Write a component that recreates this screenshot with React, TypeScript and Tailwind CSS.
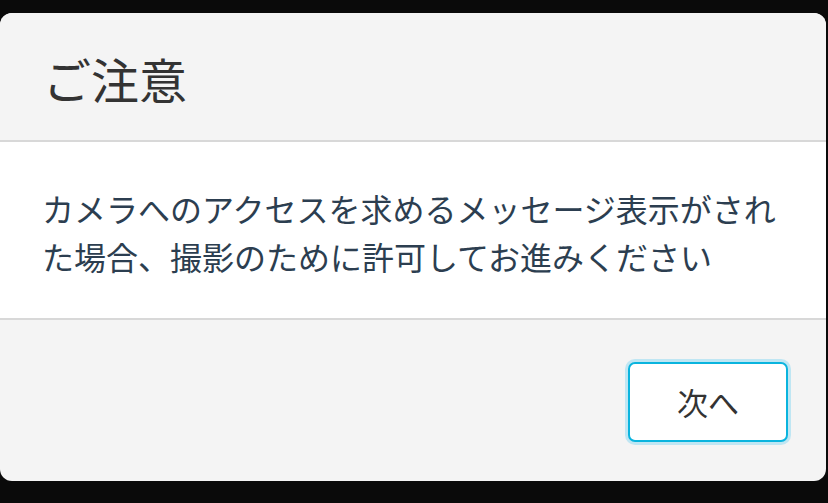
import React from 'react'

export default function App() {
  return (
    <div
      className="w-[828px] h-[503px] bg-[#0a0a0a] pt-[13px] overflow-hidden"
      style={{ fontFamily: '"Noto Sans CJK JP", "Noto Sans", sans-serif' }}
    >
      <div className="w-[826px] h-[468px] rounded-[12px] overflow-hidden flex flex-col bg-[#f4f4f4]">
        {/* header */}
        <div className="h-[129px] border-b-2 border-[#d8d8d8] flex items-center px-[43px] pt-[3px] bg-[#f4f4f4]">
          <h1 className="text-[48px] leading-none text-[#333333] font-normal">ご注意</h1>
        </div>
        {/* body */}
        <div className="h-[178px] bg-white border-b-2 border-[#d8d8d8] px-[42px] pt-[3px] flex items-center">
          <p className="text-[32px] leading-[48px] text-[#2c3e50]">
            カメラへのアクセスを求めるメッセージ表示がされた場合、撮影のために許可してお進みください
          </p>
        </div>
        {/* footer */}
        <div className="flex-1 flex items-center justify-end pr-[38px] pt-[3px]">
          <button className="w-[160px] h-[80px] bg-white border-2 border-[#0ab4de] rounded-[7px] ring-[3px] ring-[#bfe6f3] text-[31px] text-[#333333]">
            次へ
          </button>
        </div>
      </div>
    </div>
  )
}
